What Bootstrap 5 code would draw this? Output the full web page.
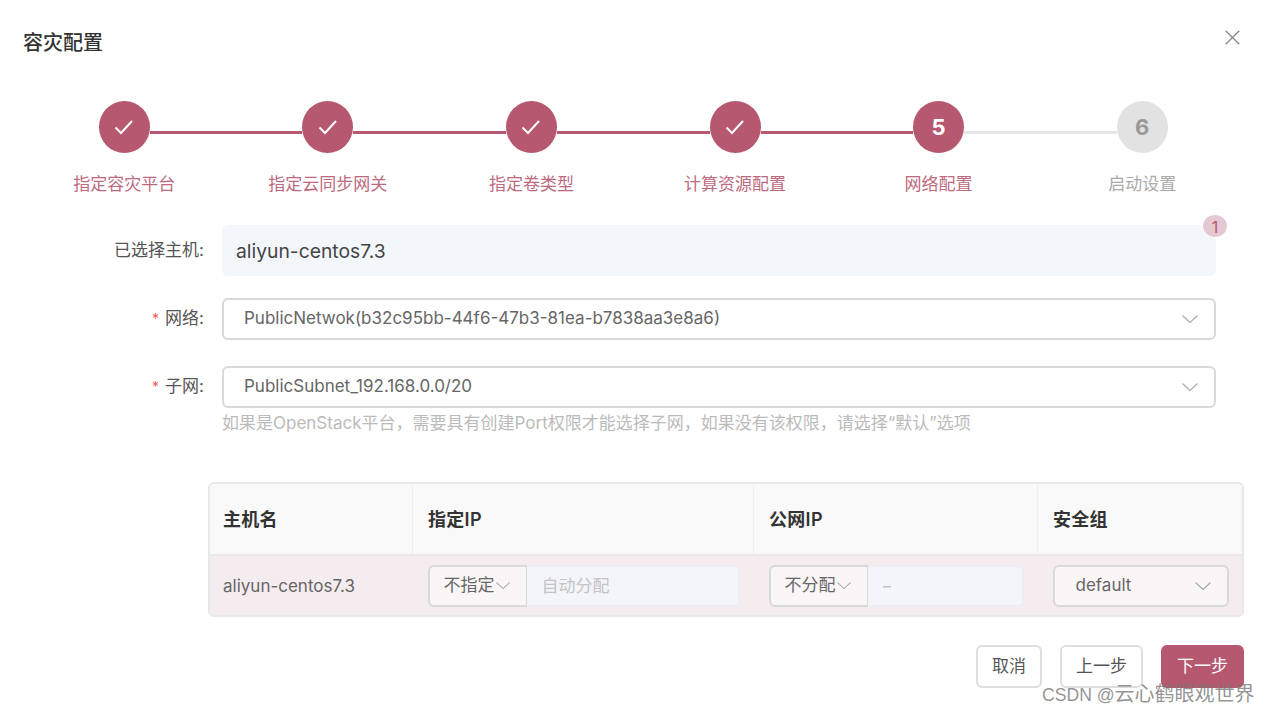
<!DOCTYPE html>
<html lang="zh">
<head>
<meta charset="utf-8">
<title>容灾配置</title>
<link href="https://cdn.jsdelivr.net/npm/bootstrap@5.3.0/dist/css/bootstrap.min.css" rel="stylesheet">
<style>
:root { --rose: #b6586f; }
html, body { height: 100%; }
body { font-family: Inter, "Noto Sans CJK SC", sans-serif; font-size: 17px; color: #555; background: #fff; overflow: hidden; }
.dlg { width: 1268px; height: 713px; padding: 29px 24px 0 22.5px; position: relative; overflow: hidden; }
.dlg-title { font-size: 20px; line-height: 28px; font-weight: 500; color: #333; margin: 0 0 44px; padding-left: .5px; }
.dlg-close { position: absolute; top: 30px; right: 28px; width: 15px; height: 15px; padding: 0; border: 0; background: none; line-height: 0; }
.step { flex: 1 1 0; min-width: 0; text-align: center; }
.step-head { display: flex; align-items: flex-start; }
.step-line { flex: 1 1 0; height: 3px; margin-top: 30px; background: transparent; }
.step-line.on { background: var(--rose); }
.step-line.off { background: #e6e6e6; }
.step-dot { flex: 0 0 51px; height: 52px; border-radius: 50%; background: var(--rose); color: #fff; font-size: 22px; font-weight: 700; }
.step-dot.todo { background: #e2e2e2; color: #999; }
.step-text { margin-top: 19px; line-height: 24px; color: #bd6a80; }
.step-text.todo { color: #aaa; }
.frm-row { display: flex; align-items: center; }
.frm-label { flex: 0 0 181.5px; margin-right: 18px; text-align: right; color: #555; white-space: nowrap; }
.frm-body { flex: 0 0 994px; min-width: 0; position: relative; }
.req { color: #e8605a; margin-right: 6px; font-size: 14px; }
.host-box { height: 51px; line-height: 53px; padding: 0 14px; background: #f3f6fb; border-radius: 6px; color: #444; font-size: 19.3px; }
.count-pill { position: absolute; top: -11px; right: -12px; width: 26px; height: 24px; border-radius: 50%; background: #e6c8d3; border: 1px solid #fff; color: #b6586f; text-align: center; font-size: 16px; line-height: 24px; }
.sel.form-select { height: 42px; border: 2px solid #d9d9d9; border-radius: 6px; color: #666; font-size: 17px; padding: 0 40px 0 20px; background-size: 18px 10px; background-position: right 15px center; background-image: url("data:image/svg+xml,%3Csvg xmlns='http://www.w3.org/2000/svg' viewBox='0 0 18 10'%3E%3Cpath d='M1.5 1.5 9 8.5l7.5-7' fill='none' stroke='%23aaa' stroke-width='1.2'/%3E%3C/svg%3E"); }
.hint { line-height: 22px; margin-top: 4px; color: #bbb; white-space: nowrap; }
.tbl-wrap { margin: 48px 0 28px 185.5px; border: 2px solid #e8e8e8; border-radius: 6px; overflow: hidden; }
.tbl.table { table-layout: fixed; margin: 0; width: 100%; }
.tbl.table th { background: #f9f9f9; height: 71px; padding: 1px 15px 0; vertical-align: middle; font-size: 18px; font-weight: 600; letter-spacing: .3px; color: #333; border-right: 1px solid #efefef; border-bottom: 2px solid #e8e8e8; }
.tbl.table th:last-child { border-right: 0; }
.tbl.table td { background: #f5ecef; height: 60px; padding: 0 15px; vertical-align: middle; color: #666; border: 0; font-size: 17px; }
.tbl.table th:first-child { padding-left: 13px; }
.tbl.table td:first-child { padding: 2px 15px 0 13px; }
.ig.input-group { flex-wrap: nowrap; }
.ig .sel.form-select { flex: 0 0 auto; background-color: #faf6f7; padding: 0 0 0 14px; background-position: right 15px center; background-size: 16px 9px; border-radius: 6px 0 0 6px; }
.ig .form-control { height: 42px; background: #f4f5fa; border: 2px solid #eceef4; border-left: 0; border-radius: 0 6px 6px 0; font-size: 17px; padding: 0 0 0 15px; color: #bbb; }
.ig .form-control::placeholder { color: #c4c4c4; }
.ig1 { width: 312px; } .ig1 .sel.form-select { width: 100px; }
.ig2 { width: 255px; } .ig2 .sel.form-select { width: 100px; }
.sel.sg.form-select { width: 176px; background-color: #faf6f7; padding-left: 21px; }
.act { height: 43px; padding: 0; font-size: 17px; border-radius: 6px; border: 2px solid #dedede; color: #555; background: #fff; }
.act-a { width: 66px; } .act-b { width: 83px; }
.act-p { background: var(--rose); border-color: var(--rose); color: #fff; }
.wmark { position: absolute; left: 1042px; top: 681px; font-size: 17.6px; line-height: 26px; color: rgba(120,120,120,.8); white-space: nowrap; font-family: "Liberation Sans", "Noto Sans CJK SC", sans-serif; }
.wmark-cjk { font-size: 20px; }
</style>
</head>
<body>
<div class="dlg">
  <h5 class="dlg-title">容灾配置</h5>
  <button class="dlg-close" type="button" aria-label="关闭">
    <svg width="15" height="15" viewBox="0 0 15 15"><path d="M.7.7l13.6 13.6M14.3.7.7 14.3" fill="none" stroke="#888" stroke-width="1.3"/></svg>
  </button>

  <div class="d-flex">
    <div class="step"><div class="step-head"><i class="step-line"></i><div class="step-dot d-flex align-items-center justify-content-center"><svg width="20" height="16" viewBox="0 0 20 16"><path d="M1.5 8.5 7 14 18 2" fill="none" stroke="#fff" stroke-width="2"/></svg></div><i class="step-line on"></i></div><div class="step-text">指定容灾平台</div></div>
    <div class="step"><div class="step-head"><i class="step-line on"></i><div class="step-dot d-flex align-items-center justify-content-center"><svg width="20" height="16" viewBox="0 0 20 16"><path d="M1.5 8.5 7 14 18 2" fill="none" stroke="#fff" stroke-width="2"/></svg></div><i class="step-line on"></i></div><div class="step-text">指定云同步网关</div></div>
    <div class="step"><div class="step-head"><i class="step-line on"></i><div class="step-dot d-flex align-items-center justify-content-center"><svg width="20" height="16" viewBox="0 0 20 16"><path d="M1.5 8.5 7 14 18 2" fill="none" stroke="#fff" stroke-width="2"/></svg></div><i class="step-line on"></i></div><div class="step-text">指定卷类型</div></div>
    <div class="step"><div class="step-head"><i class="step-line on"></i><div class="step-dot d-flex align-items-center justify-content-center"><svg width="20" height="16" viewBox="0 0 20 16"><path d="M1.5 8.5 7 14 18 2" fill="none" stroke="#fff" stroke-width="2"/></svg></div><i class="step-line on"></i></div><div class="step-text">计算资源配置</div></div>
    <div class="step"><div class="step-head"><i class="step-line on"></i><div class="step-dot d-flex align-items-center justify-content-center">5</div><i class="step-line off"></i></div><div class="step-text">网络配置</div></div>
    <div class="step"><div class="step-head"><i class="step-line off"></i><div class="step-dot todo d-flex align-items-center justify-content-center">6</div><i class="step-line"></i></div><div class="step-text todo">启动设置</div></div>
  </div>

  <div class="frm-row" style="margin-top:29px">
    <div class="frm-label">已选择主机:</div>
    <div class="frm-body">
      <div class="host-box">aliyun-centos7.3</div>
      <span class="count-pill">1</span>
    </div>
  </div>
  <div class="frm-row" style="margin-top:22px">
    <div class="frm-label"><span class="req">*</span>网络:</div>
    <div class="frm-body"><select class="form-select sel"><option>PublicNetwok(b32c95bb-44f6-47b3-81ea-b7838aa3e8a6)</option></select></div>
  </div>
  <div class="frm-row" style="margin-top:26px">
    <div class="frm-label"><span class="req">*</span>子网:</div>
    <div class="frm-body"><select class="form-select sel"><option>PublicSubnet_192.168.0.0/20</option></select></div>
  </div>
  <div class="frm-row">
    <div class="frm-label"></div>
    <div class="frm-body hint">如果是OpenStack平台，需要具有创建Port权限才能选择子网，如果没有该权限，请选择“默认”选项</div>
  </div>

  <div class="tbl-wrap">
    <table class="table tbl">
      <colgroup><col style="width:202.5px"><col style="width:341px"><col style="width:284px"><col></colgroup>
      <thead><tr><th>主机名</th><th>指定IP</th><th>公网IP</th><th>安全组</th></tr></thead>
      <tbody>
        <tr>
          <td>aliyun-centos7.3</td>
          <td><div class="input-group ig ig1"><select class="form-select sel"><option>不指定</option></select><input class="form-control" placeholder="自动分配"></div></td>
          <td><div class="input-group ig ig2"><select class="form-select sel"><option>不分配</option></select><input class="form-control" placeholder="–"></div></td>
          <td><select class="form-select sel sg"><option>default</option></select></td>
        </tr>
      </tbody>
    </table>
  </div>

  <div class="d-flex justify-content-end" style="gap:18px">
    <button class="btn act act-a" type="button">取消</button>
    <button class="btn act act-b" type="button">上一步</button>
    <button class="btn act act-b act-p" type="button">下一步</button>
  </div>

  <div class="wmark">CSDN @<span class="wmark-cjk">云心鹤眼观世界</span></div>
</div>
</body>
</html>
